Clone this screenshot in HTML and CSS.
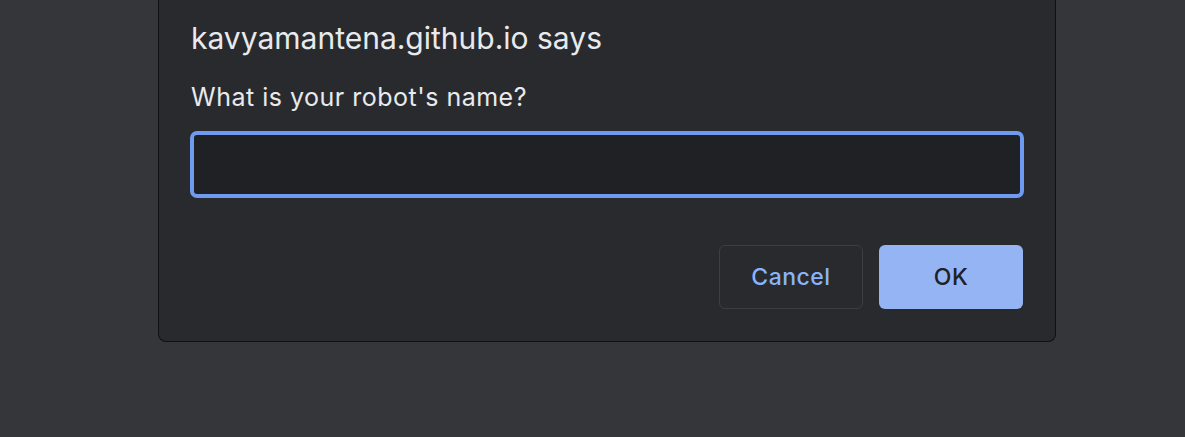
FILE: index.html
```html
<!DOCTYPE html>
<html>
<head>
<meta charset="utf-8">
<link rel="stylesheet" href="styles.css">
</head>
<body>
<div class="stage">
  <div class="dialog">
    <div class="title">kavyamantena.github.io says</div>
    <div class="message">What is your robot's name?</div>
    <div class="field"></div>
    <div class="actions">
      <div class="btn cancel">Cancel</div>
      <div class="btn ok">OK</div>
    </div>
  </div>
</div>
</body>
</html>
```
FILE: styles.css
```css
html, body {
  margin: 0;
  padding: 0;
  background: #35363a;
  width: 1185px;
  height: 437px;
  overflow: hidden;
  font-family: Inter, "Noto Sans", sans-serif;
}
.stage {
  display: flex;
  justify-content: flex-start;
  padding-left: 158px;
}
.dialog {
  box-sizing: border-box;
  width: 898px;
  height: 342px;
  background: #292a2e;
  border: 1px solid #0f1012;
  border-top: none;
  border-radius: 0 0 8px 8px;
  padding: 20px 31px 0 31px;
  display: flex;
  flex-direction: column;
}
.title {
  color: #e8eaed;
  font-size: 30px;
  line-height: 36px;
  padding-left: 1px;
}
.message {
  color: #e8eaed;
  font-size: 25px;
  line-height: 30px;
  letter-spacing: 0.5px;
  margin-top: 26px;
  padding-left: 1px;
}
.field {
  box-sizing: border-box;
  margin-top: 19px;
  width: 834px;
  height: 67px;
  background: #202124;
  border: 4px solid #6e9bef;
  border-radius: 7px;
}
.actions {
  display: flex;
  justify-content: flex-end;
  gap: 16px;
  margin-top: 47px;
  width: 833px;
}
.btn {
  box-sizing: border-box;
  width: 144px;
  height: 64px;
  border-radius: 6px;
  display: flex;
  align-items: center;
  justify-content: center;
  font-size: 23px;
  letter-spacing: 0.5px;
  font-weight: 500;
}
.cancel {
  border: 1px solid #3c3e42;
  color: #8ab4f8;
}
.ok {
  background: #94b4f4;
  color: #202124;
}
```
